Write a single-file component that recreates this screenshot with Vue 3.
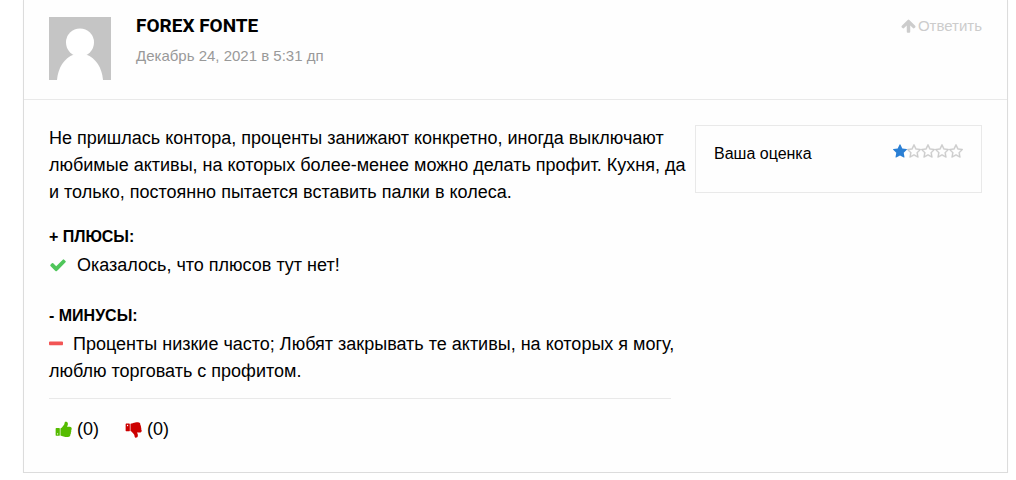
<script setup>
import { ref } from 'vue'

const likes = ref(0)
const dislikes = ref(0)
const rating = 1

const star = 'M1728 647q0 22-26 48l-363 354 86 500q1 7 1 20 0 21-10.5 35.5t-30.5 14.5q-19 0-40-12l-449-236-449 236q-22 12-40 12-21 0-31.5-14.5t-10.5-35.5q0-6 2-20l86-500-364-354q-25-27-25-48 0-37 56-46l502-73 225-455q19-41 49-41t49 41l225 455 502 73q56 9 56 46z'
const starOutline = 'M1201 1004l306-297-422-62-189-382-189 382-422 62 306 297-73 421 378-199 377 199zm527-357q0 22-26 48l-363 354 86 500q1 7 1 20 0 50-41 50-19 0-40-12l-449-236-449 236q-22 12-40 12-21 0-31.5-14.5t-10.5-35.5q0-6 2-20l86-500-364-354q-25-27-25-48 0-37 56-46l502-73 225-455q19-41 49-41t49 41l225 455 502 73q56 9 56 46z'
const thumb = 'M320 1344q0-26-19-45t-45-19q-27 0-45.5 19t-18.5 45q0 27 18.5 45.5t45.5 18.5q26 0 45-18.5t19-45.5zm160-512v640q0 26-19 45t-45 19h-288q-26 0-45-19t-19-45v-640q0-26 19-45t45-19h288q26 0 45 19t19 45zm1184 0q0 86-55 149 15 44 15 76 3 76-43 137 17 56 0 117-15 57-54 94 9 112-49 181-64 76-197 78h-129q-66 0-144-15.5t-121.5-29-120.5-39.5q-123-43-158-44-26-1-45-19.5t-19-44.5v-641q0-25 18-43.5t43-20.5q24-2 76-59t101-121q68-87 101-120 18-18 31-48t17.5-48.5 13.5-60.5q7-39 12.5-61t19.5-52 34-50q19-19 45-19 46 0 82.5 10.5t60 26 40 40.5 24 45 12 50 5 45 .5 39q0 38-9.5 76t-19 60-27.5 56q-3 6-10 18t-11 22-8 24h277q78 0 135 57t57 135z'
</script>

<template>
  <article class="review">
    <header class="head">
      <svg class="avatar" viewBox="0 0 62 63" aria-hidden="true">
        <rect width="62" height="63" fill="#c5c5c5" />
        <ellipse cx="31" cy="25.5" rx="14" ry="14" fill="#fff" />
        <path d="M8 63C9 51 15 41 25 37.500H37C47 41 53 51 54 63Z" fill="#fff" />
      </svg>
      <div class="author">
        <h2 class="name">FOREX FONTE</h2>
        <time class="date" datetime="2021-12-24T05:31">Декабрь 24, 2021 в 5:31 дп</time>
      </div>
      <a class="reply" href="#reply">
        <svg class="icon-reply" viewBox="64 128 1664 1664" aria-hidden="true">
          <path d="M1675 971q0 51-37 90l-75 75q-38 38-91 38-54 0-90-38l-294-293v704q0 52-37.500 84.500t-90.500 32.500h-128q-53 0-90.500-32.500t-37.500-84.500v-704l-294 293q-36 38-90 38t-90-38l-75-75q-38-38-38-90 0-53 38-91l651-651q35-37 90-37 54 0 91 37l651 651q37 39 37 91z" />
        </svg>
        <span>Ответить</span>
      </a>
    </header>

    <div class="body">
      <div class="main">
        <p class="text">Не пришлась контора, проценты занижают конкретно, иногда выключают любимые активы, на которых более-менее можно делать профит. Кухня, да и только, постоянно пытается вставить палки в колеса.</p>
        <section class="group">
          <h3 class="label">+ ПЛЮСЫ:</h3>
          <p class="text">
            <svg class="icon check" viewBox="0 0 1792 1792" aria-hidden="true">
              <path d="M1671 566q0 40-28 68l-724 724-136 136q-28 28-68 28t-68-28l-136-136-362-362q-28-28-28-68t28-68l136-136q28-28 68-28t68 28l294 295 656-657q28-28 68-28t68 28l136 136q28 28 28 68z" />
            </svg>Оказалось, что плюсов тут нет!</p>
        </section>
        <section class="group minuses">
          <h3 class="label">- МИНУСЫ:</h3>
          <p class="text">
            <svg class="icon minus" viewBox="192 0 1408 1792" aria-hidden="true">
              <path d="M1600 736v192q0 40-28 68t-68 28h-1216q-40 0-68-28t-28-68v-192q0-40 28-68t68-28h1216q40 0 68 28t28 68z" />
            </svg>Проценты низкие часто; Любят закрывать те активы, на которых я могу, люблю торговать с профитом.</p>
        </section>
        <footer class="votes">
          <button class="vote" type="button" aria-label="Нравится" @click="likes++">
            <svg class="icon up" viewBox="0 64 1792 1792" aria-hidden="true"><path :d="thumb" /></svg>
            <span>({{ likes }})</span>
          </button>
          <button class="vote" type="button" aria-label="Не нравится" @click="dislikes++">
            <svg class="icon down" viewBox="0 0 1792 1792" aria-hidden="true">
              <path :d="thumb" transform="matrix(1 0 0 -1 0 1792)" />
            </svg>
            <span>({{ dislikes }})</span>
          </button>
        </footer>
      </div>

      <aside class="score">
        <span>Ваша оценка</span>
        <span class="stars" role="img" aria-label="1 из 5">
          <svg v-for="n in 5" :key="n" class="star" :class="{ on: n <= rating }" viewBox="64 0 1664 1664">
            <path :d="n <= rating ? star : starOutline" />
          </svg>
        </span>
      </aside>
    </div>
  </article>
</template>

<style>
body {
  background: #fff;
}
</style>

<style scoped>
.review {
  margin: 0 8px 0 23px;
  border: 1px solid #dcdcdc;
  border-top: 0;
  box-shadow: 0 1px 1px rgba(0, 0, 0, 0.05);
  background: #fefefe;
  color: #000;
  font: 18px/27px "Liberation Sans", Arial, sans-serif;
}
.head {
  display: flex;
  align-items: flex-start;
  padding: 17px 25px 19px;
  border-bottom: 1px solid #e9e9e9;
}
.avatar {
  width: 62px;
  height: 63px;
  margin-right: 25px;
}
.author {
  flex: 1;
}
.name {
  margin: 0 0 11px;
  font: 700 19px/18px Roboto, sans-serif;
}
.date {
  display: block;
  color: #999;
  font-size: 15px;
  line-height: 20px;
}
.reply {
  display: flex;
  align-items: center;
  gap: 2px;
  color: #ccc;
  font-size: 15px;
  line-height: 18px;
  text-decoration: none;
}
.icon-reply {
  width: 15px;
  height: 15px;
  fill: currentColor;
}
.body {
  display: grid;
  grid-template-columns: 2fr 1fr;
  align-items: start;
  padding: 25px 25px 29px;
}
.text {
  margin: 0 -16px 0 0;
}
.group {
  margin-top: 17px;
}
.minuses {
  margin-top: 23px;
}
.label {
  margin: 0 0 2px;
  font-size: 16px;
  line-height: 27px;
}
.icon {
  width: 18px;
  height: 18px;
  vertical-align: -3px;
  fill: currentColor;
}
.check {
  margin-right: 10px;
  color: #4fc65a;
}
.minus {
  width: 14px;
  margin-right: 10px;
  color: #f25555;
}
.votes {
  display: flex;
  gap: 26px;
  margin-top: 13px;
  padding: 17px 6px 0;
  border-top: 1px solid #e9e9e9;
}
.vote {
  display: flex;
  align-items: center;
  gap: 4px;
  padding: 0;
  border: 0;
  background: none;
  color: inherit;
  font: inherit;
  cursor: pointer;
}
.up {
  color: #5b0;
}
.down {
  color: #c00;
}
.score {
  display: flex;
  justify-content: space-between;
  margin-left: 24px;
  padding: 18px 18px 28px;
  border: 1px solid #e9e9e9;
  font-size: 16px;
  line-height: 20px;
}
.stars {
  display: flex;
}
.star {
  width: 14px;
  height: 14px;
  fill: #ccc;
  stroke: #ccc;
  stroke-width: 40px;
}
.star.on {
  fill: #2a7fd4;
  stroke: none;
}
</style>
